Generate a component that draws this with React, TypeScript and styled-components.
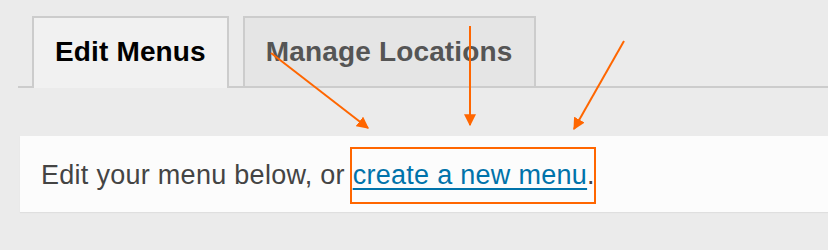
import styled, { createGlobalStyle } from "styled-components";

const Global = createGlobalStyle`
  body {
    margin: 0;
    background: #ebebeb;
    font-family: "Liberation Sans", Arial, sans-serif;
  }
`;

const Page = styled.div`
  position: relative;
  width: 828px;
  height: 250px;
  overflow: hidden;
`;

const TabBar = styled.nav`
  display: flex;
  align-items: flex-end;
  gap: 14px;
  margin-left: 18px;
  padding: 16px 0 0 14px;
  border-bottom: 2px solid #cccccc;
`;

const Tab = styled.a<{ $active?: boolean }>`
  display: block;
  height: 68px;
  line-height: 68px;
  padding: 0 21px;
  border: 2px solid #cccccc;
  border-bottom: none;
  font-size: 28px;
  font-weight: 700;
  letter-spacing: 0.15px;
  text-decoration: none;
  color: ${(p) => (p.$active ? "#000000" : "#555555")};
  background: ${(p) => (p.$active ? "#f1f1f1" : "#e5e5e5")};
  margin-bottom: ${(p) => (p.$active ? "-2px" : "0")};
  padding-bottom: ${(p) => (p.$active ? "2px" : "0")};
`;

const Notice = styled.div`
  margin: 48px 0 0 20px;
  padding: 21px 21px 19px;
  line-height: 36px;
  font-size: 27px;
  letter-spacing: 0.28px;
  color: #444444;
  background: #fcfcfc;
  box-shadow: 0 1px 1px rgba(0, 0, 0, 0.05);
`;

const Highlight = styled.span`
  position: relative;

  &::after {
    content: "";
    position: absolute;
    left: -3px;
    right: -1px;
    top: -13px;
    bottom: -14px;
    border: 2px solid #ff6600;
  }
`;

const MenuLink = styled.a`
  color: #0073aa;
  text-decoration: underline;
  text-decoration-thickness: 2px;
  text-underline-offset: 4px;
`;

const Arrows = styled.svg`
  position: absolute;
  left: 0;
  top: 0;
  pointer-events: none;
`;

const arrows = [
  { x1: 271, y1: 53, x2: 368, y2: 128 },
  { x1: 470, y1: 26, x2: 470, y2: 125 },
  { x1: 624, y1: 41, x2: 574, y2: 129 },
];

const App = () => {
  return (
    <Page>
      <Global />
      <TabBar>
        <Tab $active>Edit Menus</Tab>
        <Tab>Manage Locations</Tab>
      </TabBar>
      <Notice>
        Edit your menu below, or{" "}
        <Highlight>
          <MenuLink href="#">create a new menu</MenuLink>.
        </Highlight>
      </Notice>
      <Arrows width="828" height="250" viewBox="0 0 828 250">
        <defs>
          <marker
            id="head"
            viewBox="0 0 10 10"
            refX="9"
            refY="5"
            markerWidth="6"
            markerHeight="6"
            orient="auto"
          >
            <path d="M0 0 L10 5 L0 10 Z" fill="#ff6600" />
          </marker>
        </defs>
        {arrows.map((a, i) => (
          <line
            key={i}
            x1={a.x1}
            y1={a.y1}
            x2={a.x2}
            y2={a.y2}
            stroke="#ff6600"
            strokeWidth="2"
            markerEnd="url(#head)"
          />
        ))}
      </Arrows>
    </Page>
  );
};

export default App;
